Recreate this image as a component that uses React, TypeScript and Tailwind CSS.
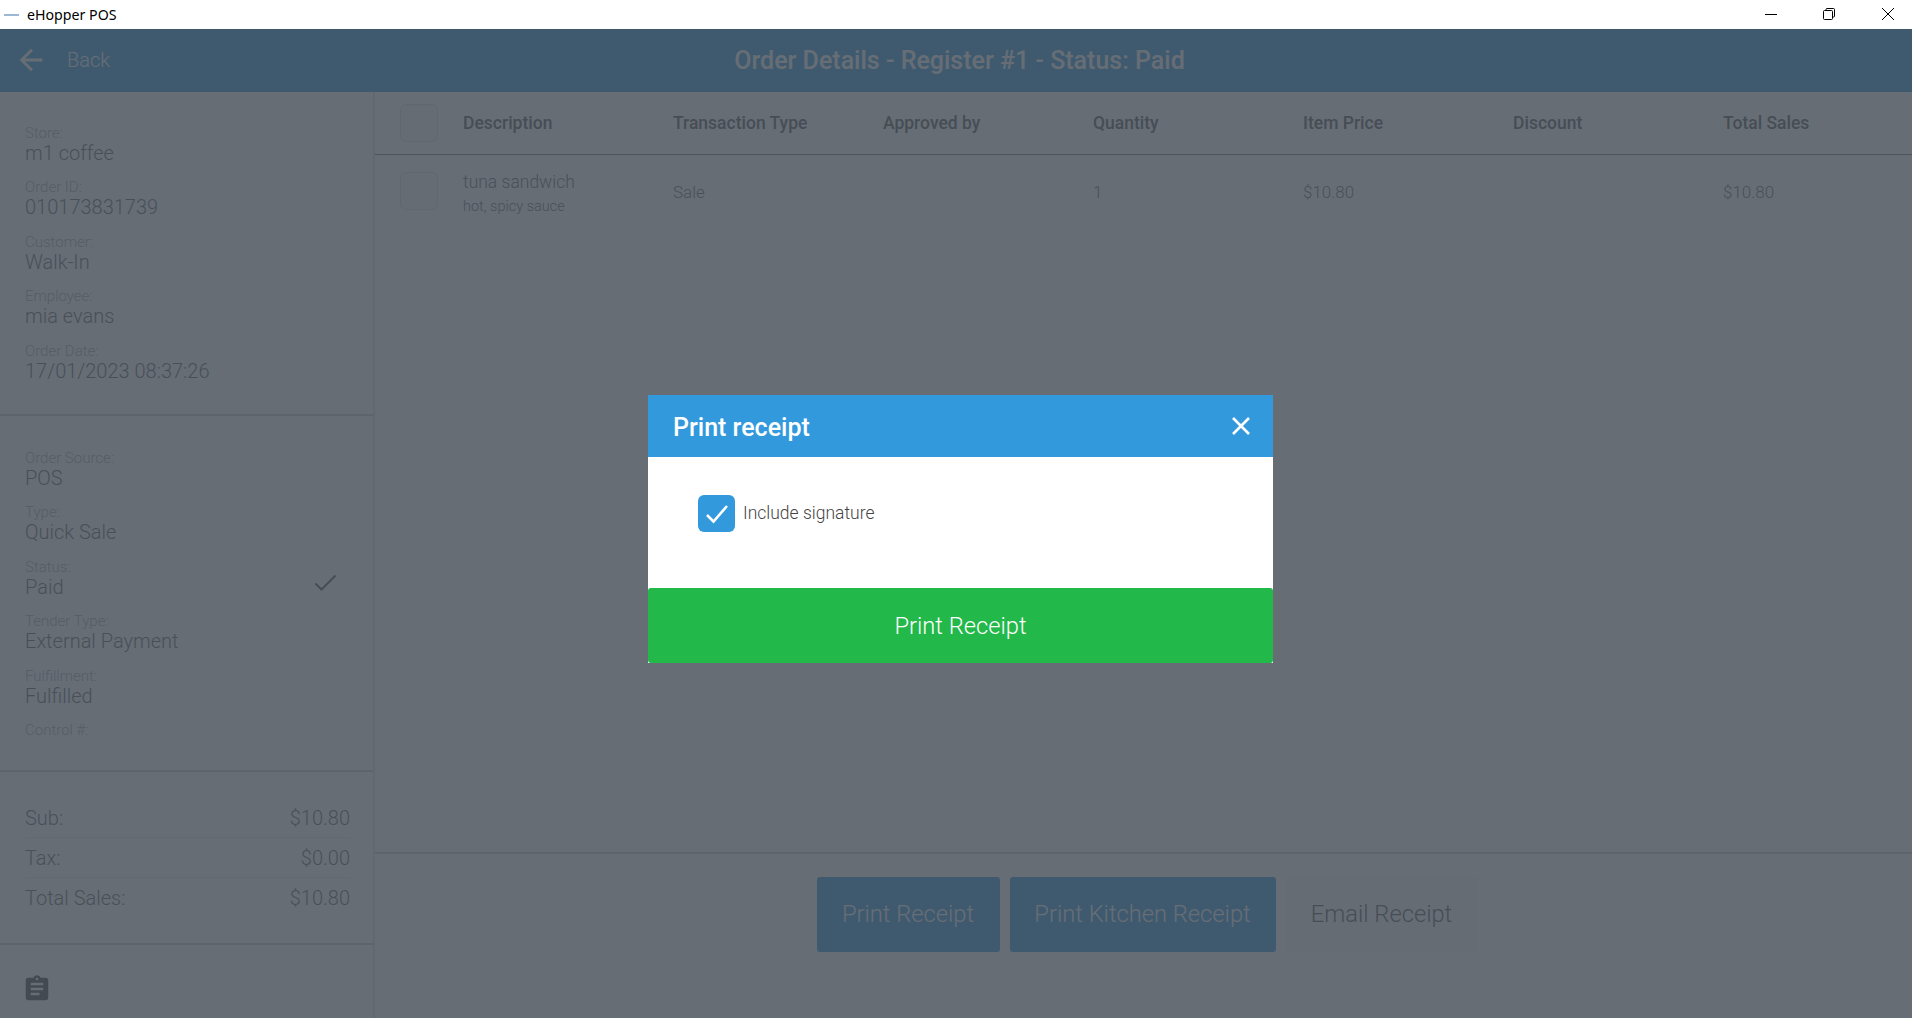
const LINE = 'border-[#9a9a9a]/50';

const INFO_TOP = [
  ['Store:', 'm1 coffee'],
  ['Order ID:', '010173831739'],
  ['Customer:', 'Walk-In'],
  ['Employee:', 'mia evans'],
  ['Order Date:', '17/01/2023 08:37:26'],
];

const INFO_BOTTOM = [
  ['Order Source:', 'POS'],
  ['Type:', 'Quick Sale'],
  ['Status:', 'Paid'],
  ['Tender Type:', 'External Payment'],
  ['Fulfillment:', 'Fulfilled'],
  ['Control #:', ''],
];

const TOTALS = [
  ['Sub:', '$10.80'],
  ['Tax:', '$0.00'],
  ['Total Sales:', '$10.80'],
];

const COLUMNS = ['Description', 'Transaction Type', 'Approved by', 'Quantity', 'Item Price', 'Discount', 'Total Sales'];

function InfoItem({ label, value }: { label: string; value: string }) {
  return (
    <div className="h-[54.4px]">
      <div className="text-[15px] leading-[18px] font-light text-[#a8a8a8]">{label}</div>
      {value && <div className="text-[20px] leading-[23px] font-light text-[#636363]">{value}</div>}
    </div>
  );
}

function Sidebar() {
  return (
    <aside className="w-[375px] shrink-0 flex flex-col border-r-2 border-[#9a9a9a]/30">
      <div className={`h-[324px] shrink-0 pt-[32px] pl-[25px] border-b-2 ${LINE}`}>
        {INFO_TOP.map(([label, value]) => (
          <InfoItem key={label} label={label} value={value} />
        ))}
      </div>

      <div className={`relative h-[356px] shrink-0 pt-[33px] pl-[25px] border-b-2 ${LINE}`}>
        {INFO_BOTTOM.map(([label, value]) => (
          <InfoItem key={label} label={label} value={value} />
        ))}
        <svg className="absolute left-[314px] top-[158px]" width="23" height="18" viewBox="0 0 23 18" fill="none">
          <path d="M1.5 9.5 L7.5 15.5 L21.5 1.5" stroke="#555" strokeWidth="2" />
        </svg>
      </div>

      <div className={`h-[173px] shrink-0 pt-[26px] pl-[25px] pr-[23px] border-b-2 ${LINE}`}>
        {TOTALS.map(([label, value], i) => (
          <div key={label} className={`h-[40px] flex justify-between text-[20px] leading-[40px] font-light text-[#666] ${i < 2 ? 'border-b border-[#9a9a9a]/20' : ''}`}>
            <span>{label}</span>
            <span>{value}</span>
          </div>
        ))}
      </div>

      <div className="pt-[29px] pl-[22px]">
        <svg width="30" height="30" viewBox="0 0 24 24" fill="#444">
          <path d="M19 3h-4.18C14.4 1.84 13.3 1 12 1c-1.3 0-2.4.84-2.82 2H5c-1.1 0-2 .9-2 2v14c0 1.1.9 2 2 2h14c1.1 0 2-.9 2-2V5c0-1.1-.9-2-2-2zm-7 0c.55 0 1 .45 1 1s-.45 1-1 1-1-.45-1-1 .45-1 1-1zm2 14H7v-2h7v2zm3-4H7v-2h10v2zm0-4H7V7h10v2z" />
        </svg>
      </div>
    </aside>
  );
}

function RowCheck() {
  return <div className="w-[38px] h-[38px] shrink-0 rounded-md border border-[#ddd] bg-[#fafafa]" />;
}

function OrderTable() {
  return (
    <div className="flex-1">
      <div className="h-[63px] flex items-center pl-[25px] gap-[25px] border-b border-[#777]">
        <RowCheck />
        <div className="grid grid-cols-[repeat(7,210px)]">
          {COLUMNS.map((c) => (
            <div key={c} className="text-[17.5px] font-medium text-[#555] leading-[20px]">{c}</div>
          ))}
        </div>
      </div>
      <div className="h-[74px] pt-[17px] flex items-start pl-[25px] gap-[25px]">
        <RowCheck />
        <div className="grid grid-cols-[repeat(7,210px)] items-center">
          <div className="font-light text-[#666]">
            <div className="text-[17.5px] leading-[22px] mt-[-1px]">tuna sandwich</div>
            <div className="text-[14.5px] leading-[20px] mt-[4px]">hot, spicy sauce</div>
          </div>
          <div className="text-[17px] font-light text-[#666] mb-[4px]">Sale</div>
          <div />
          <div className="text-[17px] font-light text-[#666] mb-[4px]">1</div>
          <div className="text-[17px] font-light text-[#666] mb-[4px]">$10.80</div>
          <div />
          <div className="text-[17px] font-light text-[#666] mb-[4px]">$10.80</div>
        </div>
      </div>
    </div>
  );
}

function PrintModal() {
  return (
    <div className="absolute left-[648px] top-[366px] w-[625px] h-[268px] bg-white flex flex-col">
      <div className="h-[62px] shrink-0 bg-[#3199dc] flex items-center justify-between pl-[25px] pr-[22px]">
        <span className="text-[25px] font-medium text-white mt-[3px]">Print receipt</span>
        <svg width="20" height="20" viewBox="0 0 20 20" fill="none">
          <path d="M2 2 L18 18 M18 2 L2 18" stroke="white" strokeWidth="2.6" />
        </svg>
      </div>
      <div className="flex-1 pt-[38px] pl-[50px]">
        <label className="flex items-center gap-[8px]">
          <span className="w-[37px] h-[37px] rounded-md bg-[#3199dc] flex items-center justify-center">
            <svg width="24" height="20" viewBox="0 0 24 20" fill="none">
              <path d="M2 11 L8.5 17.5 L22 2" stroke="white" strokeWidth="2.6" />
            </svg>
          </span>
          <span className="text-[17.5px] font-light text-[#444] mt-[-1px]">Include signature</span>
        </label>
      </div>
      <button className="h-[75px] shrink-0 pt-[2px] rounded-[3px] bg-[#22b84a] text-[23.7px] font-light text-white">Print Receipt</button>
    </div>
  );
}

export default function App() {
  return (
    <div className="relative w-[1912px] h-[1018px] overflow-hidden bg-white font-['Roboto',sans-serif]">
      <div className="h-[29px] flex items-center bg-white">
        <svg className="ml-[4px]" width="16" height="4" viewBox="0 0 16 4">
          <rect x="0" y="1" width="15" height="2" fill="#9bb9d6" />
        </svg>
        <span className="ml-[7px] text-[14.2px] text-black font-['Noto_Sans',sans-serif]">eHopper POS</span>
        <div className="ml-auto flex items-center mt-[-2px]">
          <svg width="12" height="12" viewBox="0 0 12 12" className="mr-[46px]">
            <path d="M0 6.5 H12" stroke="#000" strokeWidth="1" />
          </svg>
          <svg width="12" height="12" viewBox="0 0 12 12" fill="none" className="mr-[47px]" stroke="#000" strokeWidth="1">
            <rect x="0.5" y="2.5" width="9" height="9" rx="1" />
            <path d="M3 2.5 V1.5 Q3 0.5 4 0.5 H10.5 Q11.5 0.5 11.5 1.5 V8 Q11.5 9 10.5 9 H9.5" />
          </svg>
          <svg width="12" height="12" viewBox="0 0 12 12" className="mr-[18px]" stroke="#000" strokeWidth="1">
            <path d="M0 0 L12 12 M12 0 L0 12" />
          </svg>
        </div>
      </div>

      <header className="relative h-[63px] flex items-center bg-[#3199dc] text-white">
        <svg className="ml-[14px] mt-[-1px]" width="34" height="34" viewBox="0 0 24 24" fill="white">
          <path d="M20 11H7.83l5.59-5.59L12 4l-8 8 8 8 1.41-1.41L7.83 13H20v-2z" />
        </svg>
        <span className="ml-[19px] mt-[-2px] text-[20px] font-light">Back</span>
        <h1 className="absolute inset-x-0 top-[16px] pl-[7px] text-center text-[25px] leading-[32px] font-medium pointer-events-none">Order Details - Register #1 - Status: Paid</h1>
      </header>

      <div className="h-[926px] flex bg-white">
        <Sidebar />
        <main className="flex-1 flex flex-col">
          <OrderTable />
          <div className={`h-[166px] shrink-0 pt-[23px] pr-[14px] flex justify-center gap-[10px] border-t-2 ${LINE}`}>
            <button className="w-[183px] h-[75px] pt-[1px] rounded-[3px] bg-[#3199dc] text-[23.7px] font-light text-white">Print Receipt</button>
            <button className="w-[266px] h-[75px] pt-[1px] rounded-[3px] bg-[#3199dc] text-[23.7px] font-light text-white">Print Kitchen Receipt</button>
            <button className="w-[192px] h-[75px] pt-[1px] rounded-[3px] bg-[#fafafa] text-[23.7px] font-light text-[#555]">Email Receipt</button>
          </div>
        </main>
      </div>

      <div className="absolute inset-x-0 top-[29px] bottom-0 bg-[#424b55]/81">
        <PrintModal />
      </div>
    </div>
  );
}
